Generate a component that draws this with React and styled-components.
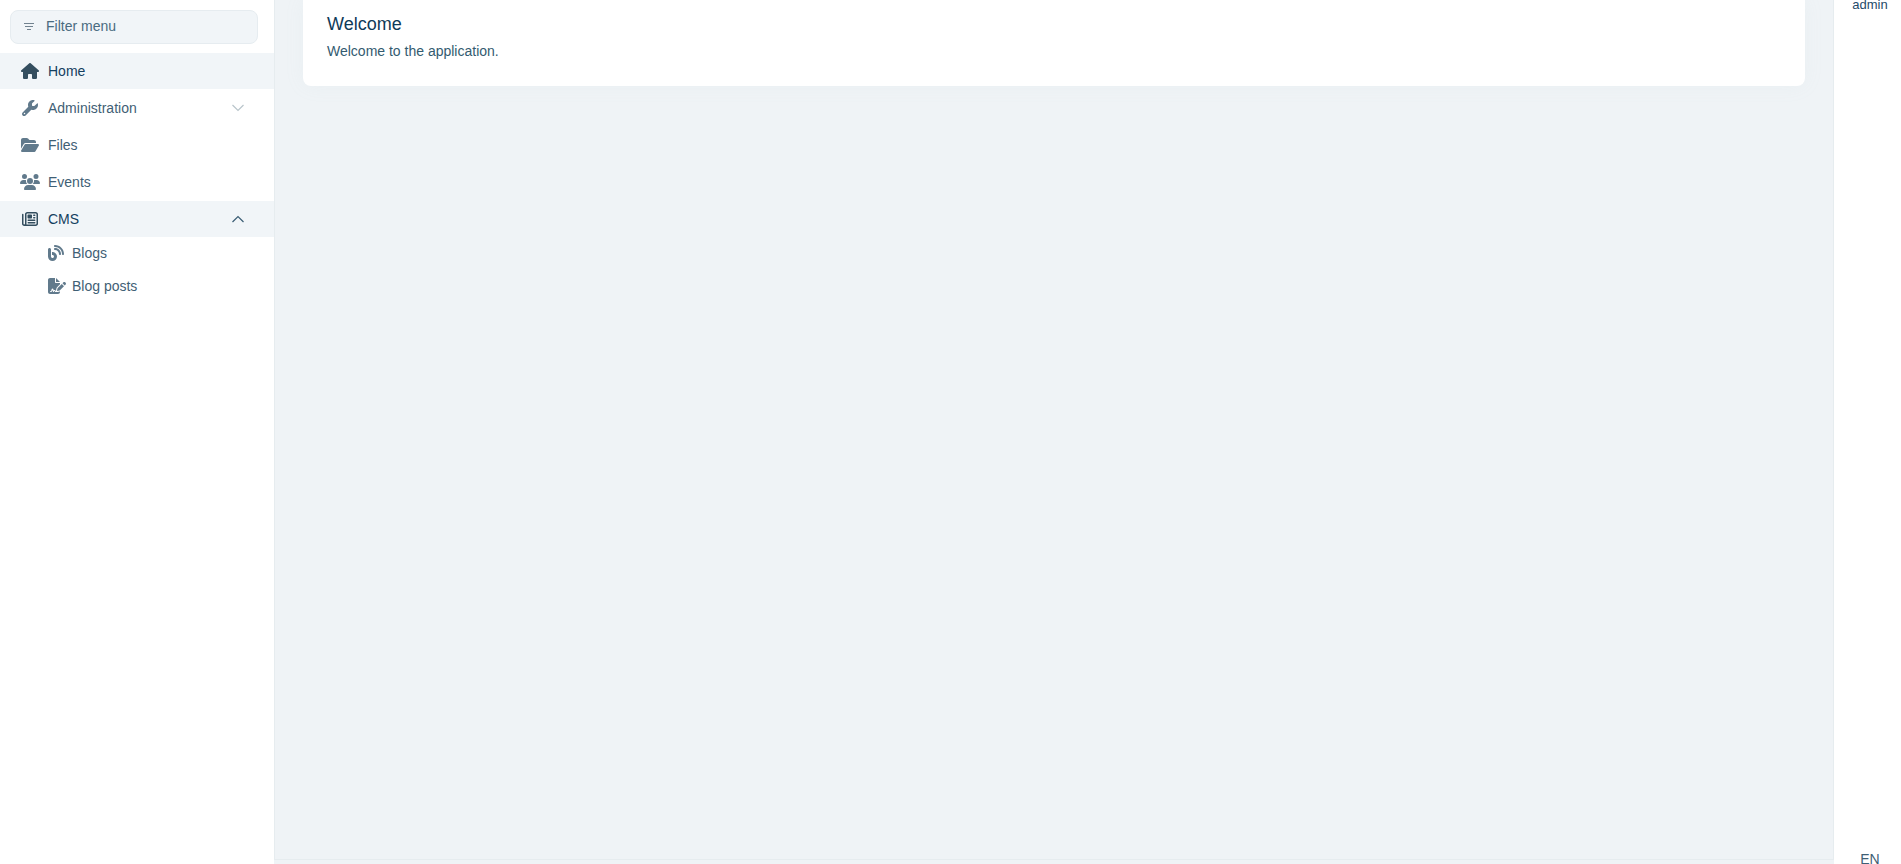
import { useState } from "react";
import styled, { createGlobalStyle } from "styled-components";
import {
  FaBlog,
  FaFileSignature,
  FaFolderOpen,
  FaHouse,
  FaRegNewspaper,
  FaUsers,
  FaWrench,
} from "react-icons/fa6";

const GlobalStyle = createGlobalStyle`
  * {
    box-sizing: border-box;
  }

  body {
    margin: 0;
    background-color: #eff3f6;
    color: #335b70;
    font-family: "Liberation Sans", Arial, sans-serif;
    font-size: 14px;
    line-height: 20px;
  }
`;

const Layout = styled.div`
  display: grid;
  grid-template-columns: 274px 1fr 67px;
  min-height: 100vh;
`;

const Sidebar = styled.aside`
  background-color: #ffffff;
  padding-top: 10px;
`;

const FilterBox = styled.label`
  display: flex;
  align-items: center;
  gap: 12px;
  height: 34px;
  margin: 0 16px 9px 10px;
  padding: 0 13px;
  background-color: #f1f5f8;
  border: 1px solid #e6ecf0;
  border-radius: 8px;
  color: #71828f;
`;

const FilterInput = styled.input`
  flex: 1;
  min-width: 0;
  padding: 0 0 2px;
  border: none;
  outline: none;
  background: transparent;
  color: #335b70;
  font: inherit;

  &::placeholder {
    color: #4a6b80;
    opacity: 1;
  }
`;

const Menu = styled.ul`
  display: flex;
  flex-direction: column;
  gap: 1px;
  margin: 0;
  padding: 0;
  list-style: none;
`;

const MenuLink = styled.a`
  display: flex;
  align-items: center;
  width: 100%;
  height: 36px;
  padding: 0 28px 0 20px;
  border: none;
  background-color: ${({ $active }) => ($active ? "#f1f5f8" : "transparent")};
  color: ${({ $active }) => ($active ? "#14405f" : "#3f6075")};
  font: inherit;
  text-align: left;
  text-decoration: none;
  cursor: pointer;
`;

const MenuIcon = styled.span`
  display: flex;
  justify-content: center;
  width: 20px;
  margin-right: 8px;
  color: ${({ $active }) => ($active ? "#344e5f" : "#617a8c")};

  svg {
    width: ${({ $width }) => $width || 16}px;
    height: 16px;
  }
`;

const MenuText = styled.span`
  flex: 1;
`;

const Chevron = styled.svg`
  width: 16px;
  height: 16px;
  fill: none;
  stroke: ${({ $open }) => ($open ? "#3a5d74" : "#b9c5cb")};
  stroke-width: 1.2;
`;

const SubMenu = styled.ul`
  margin: 0;
  padding: 0 0 0 48px;
  list-style: none;
`;

const SubLink = styled.a`
  display: flex;
  align-items: center;
  height: 33px;
  padding-bottom: 1px;
  color: #3f6075;
  text-decoration: none;
`;

const SubIcon = styled.span`
  display: flex;
  width: 20px;
  margin-right: 4px;
  color: #617a8c;

  svg {
    width: ${({ $width }) => $width || 16}px;
    height: 16px;
  }
`;

const Content = styled.main`
  margin-bottom: 4px;
  padding: 0 28px;
  border: solid #e6ecef;
  border-width: 0 1px 1px;
`;

const Card = styled.section`
  padding: 14px 24px 25px;
  background-color: #ffffff;
  border-radius: 0 0 8px 8px;
  box-shadow: 0 0 20px rgba(180, 200, 205, 0.08);
`;

const Title = styled.h1`
  margin: 0 0 7px;
  color: #0f3a58;
  font-size: 18px;
  font-weight: 400;
  line-height: 20px;
`;

const Text = styled.p`
  margin: 0;
`;

const UserBar = styled.aside`
  display: flex;
  flex-direction: column;
  align-items: center;
  justify-content: space-between;
  padding-left: 5px;
  background-color: #ffffff;
`;

const UserName = styled.a`
  color: #1f4b69;
  font-size: 13px;
  line-height: 10px;
  text-decoration: none;
`;

const LanguageButton = styled.button`
  padding: 0;
  border: none;
  background: none;
  color: #3f6075;
  font: inherit;
  line-height: 10px;
  cursor: pointer;
`;

const menu = [
  { label: "Home", icon: FaHouse, iconWidth: 18, active: true },
  { label: "Administration", icon: FaWrench, children: [] },
  { label: "Files", icon: FaFolderOpen, iconWidth: 18 },
  { label: "Events", icon: FaUsers, iconWidth: 20 },
  {
    label: "CMS",
    icon: FaRegNewspaper,
    children: [
      { label: "Blogs", icon: FaBlog },
      { label: "Blog posts", icon: FaFileSignature, iconWidth: 18 },
    ],
  },
];

function MenuItem({ item, open, onToggle }) {
  const Icon = item.icon;
  const active = item.active || open;
  const linkProps = item.children
    ? { as: "button", type: "button", onClick: onToggle, "aria-expanded": open }
    : { href: "#" };

  return (
    <li>
      <MenuLink $active={active} {...linkProps}>
        <MenuIcon $active={active} $width={item.iconWidth}>
          <Icon />
        </MenuIcon>
        <MenuText>{item.label}</MenuText>
        {item.children && (
          <Chevron $open={open} viewBox="0 0 16 16">
            <path d={open ? "M2.5 11 8 5.5l5.5 5.5" : "M2.5 5 8 10.5 13.5 5"} />
          </Chevron>
        )}
      </MenuLink>
      {open && (
        <SubMenu>
          {item.children.map(({ label, icon: ChildIcon, iconWidth }) => (
            <li key={label}>
              <SubLink href="#">
                <SubIcon $width={iconWidth}>
                  <ChildIcon />
                </SubIcon>
                {label}
              </SubLink>
            </li>
          ))}
        </SubMenu>
      )}
    </li>
  );
}

function App() {
  const [filter, setFilter] = useState("");
  const [openItem, setOpenItem] = useState("CMS");

  const items = menu.filter(({ label }) =>
    label.toLowerCase().includes(filter.toLowerCase())
  );

  return (
    <>
      <GlobalStyle />
      <Layout>
        <Sidebar>
          <FilterBox>
            <svg width="10" height="10" viewBox="0 0 10 10" stroke="currentColor">
              <path d="M0 1.5h10M1 4.5h8M3 7.5h4" />
            </svg>
            <FilterInput
              type="text"
              aria-label="Filter menu"
              placeholder="Filter menu"
              value={filter}
              onChange={(e) => setFilter(e.target.value)}
            />
          </FilterBox>
          <nav>
            <Menu>
              {items.map((item) => (
                <MenuItem
                  key={item.label}
                  item={item}
                  open={Boolean(item.children) && openItem === item.label}
                  onToggle={() =>
                    setOpenItem(openItem === item.label ? null : item.label)
                  }
                />
              ))}
            </Menu>
          </nav>
        </Sidebar>
        <Content>
          <Card>
            <Title>Welcome</Title>
            <Text>Welcome to the application.</Text>
          </Card>
        </Content>
        <UserBar>
          <UserName href="#">admin</UserName>
          <LanguageButton type="button">EN</LanguageButton>
        </UserBar>
      </Layout>
    </>
  );
}

export default App;
